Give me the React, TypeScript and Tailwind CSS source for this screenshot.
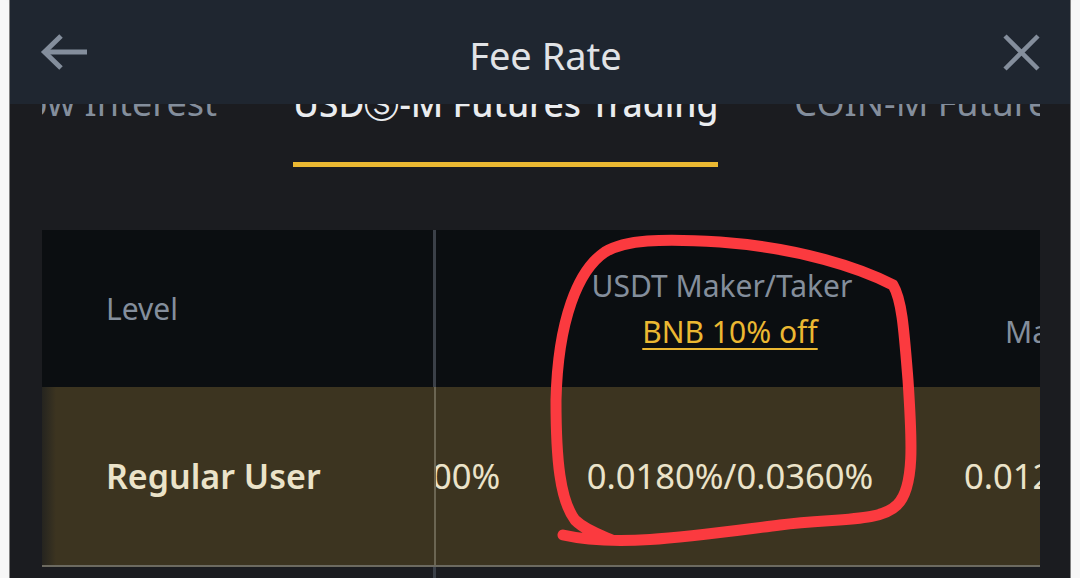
import React from "react";

const font = "font-['Noto_Sans','DejaVu_Sans',sans-serif]";

function BackArrow() {
  return (
    <svg width="48" height="38" viewBox="0 0 48 38" fill="none" stroke="#848e9c" strokeWidth="5">
      <path d="M47 19H6" />
      <path d="M21 3L4.5 19L21 35" strokeLinejoin="miter" />
    </svg>
  );
}

function CloseIcon() {
  return (
    <svg width="37" height="37" viewBox="0 0 37 37" fill="none" stroke="#848e9c" strokeWidth="4.5">
      <path d="M2 2L35 35M35 2L2 35" />
    </svg>
  );
}

// hand drawn red circle from the screenshot annotation
function Scribble() {
  return (
    <svg className="pointer-events-none absolute inset-0 z-20" width="1080" height="578" viewBox="0 0 1080 578" fill="none">
      <path
        d="M563 535 C620 548 700 535 780 525 C840 518 880 522 897 505 C915 488 912 440 908 380 C904 330 902 300 893 285 C860 268 800 248 720 242 C660 238 625 240 605 252 C578 270 558 320 556 400 C556 460 560 500 575 520 C585 530 600 535 612 540"
        stroke="#fb3a3f"
        strokeWidth="11"
        strokeLinecap="round"
        strokeLinejoin="round"
      />
    </svg>
  );
}

function TabRow() {
  return (
    <div className="ml-[32px] w-[998px] overflow-hidden pt-[81px]">
      <div className="flex items-start gap-[76px] text-[36px] leading-[44px]">
        <div className="flex w-[175px] shrink-0 justify-end">
          <span className="whitespace-nowrap text-[#848e9c]">Low Interest</span>
        </div>
        <div className="flex shrink-0 flex-col">
          <span className="whitespace-nowrap text-[35.4px] font-medium text-[#eaecef]">USDⓈ-M Futures Trading</span>
          <div className="mt-[37px] h-[5px] bg-[#ebb832]" />
        </div>
        <span className="shrink-0 whitespace-nowrap text-[#848e9c]">COIN-M Futures Trading</span>
      </div>
    </div>
  );
}

function FeeTable() {
  return (
    <div className="ml-[32px] mt-[63px] flex w-[998px]">
      {/* fixed first column */}
      <div className="flex w-[394px] shrink-0 flex-col">
        <div className="flex h-[157px] items-center border-r-[3px] border-[#3b4048] bg-[#0b0e11] pl-[64px] text-[30px] text-[#848e9c]">
          Level
        </div>
        <div className="flex h-[178px] items-center border-r-2 border-[#6b6552] bg-[#3c3420]">
          <div className="h-full w-[14px] bg-gradient-to-r from-[#25241f] to-[#3c3420]" />
          <span className="pl-[50px] text-[34px] font-semibold text-[#ebe3c9]">Regular User</span>
        </div>
        <div className="h-[2px] bg-[#6c6a60]" />
        <div className="h-[40px] border-r-[3px] border-[#3b4048]" />
      </div>

      {/* horizontally scrolled columns */}
      <div className="flex-1 overflow-hidden">
        <div className="ml-[-245px] flex h-[157px] bg-[#0b0e11]">
          <div className="w-[320px] shrink-0" />
          <div className="flex w-[438px] shrink-0 flex-col items-center justify-center text-[30px] leading-[46px]">
            <span className="whitespace-nowrap pr-[16px] text-[#848e9c]">USDT Maker/Taker</span>
            <span className="whitespace-nowrap text-[#ebb832] underline decoration-2 underline-offset-[5px]">BNB 10% off</span>
          </div>
          <div className="flex w-[400px] shrink-0 flex-col justify-center text-[30px] leading-[46px]">
            <span className="whitespace-nowrap pl-[120px] text-[#848e9c]">USDC Maker/Taker</span>
            <span className="whitespace-nowrap pl-[56px] text-[#848e9c]">Maker/Taker</span>
          </div>
        </div>
        <div className="ml-[-245px] flex h-[178px] items-center bg-[#3c3420] text-[34.6px] text-[#ebe3c9]">
          <div className="flex w-[320px] shrink-0 justify-center pl-[12px]">
            <span className="whitespace-nowrap">0.0200%/0.0500%</span>
          </div>
          <div className="flex w-[438px] shrink-0 justify-center">
            <span className="whitespace-nowrap">0.0180%/0.0360%</span>
          </div>
          <div className="w-[400px] shrink-0 pl-[15px]">
            <span className="whitespace-nowrap">0.0120%/0.0300%</span>
          </div>
        </div>
        <div className="h-[2px] bg-[#6c6a60]" />
      </div>
    </div>
  );
}

export default function App() {
  return (
    <div className={`relative flex h-[578px] w-[1080px] overflow-hidden bg-[#f5f5f5] ${font}`}>
      <div className="w-[9px] shrink-0 rounded-tr-[5px] bg-[#f7f7f7]" />
      <div className="w-px shrink-0 bg-[#7f7f7f]" />
      <main className="relative w-[1060px] shrink-0 overflow-hidden bg-[#1b1c20]">
        <header className="absolute inset-x-0 top-0 z-10 flex h-[104px] items-center justify-between bg-[#1f2630] px-[30px]">
          <BackArrow />
          <h1 className="mt-[7px] flex-1 text-center text-[38px] font-normal text-[#e1e3e6]">Fee Rate</h1>
          <CloseIcon />
        </header>
        <TabRow />
        <FeeTable />
      </main>
      <div className="w-px shrink-0 bg-[#7f7f7f]" />
      <div className="w-[9px] shrink-0 rounded-tl-[5px] bg-[#f7f7f7]" />
      <Scribble />
    </div>
  );
}
